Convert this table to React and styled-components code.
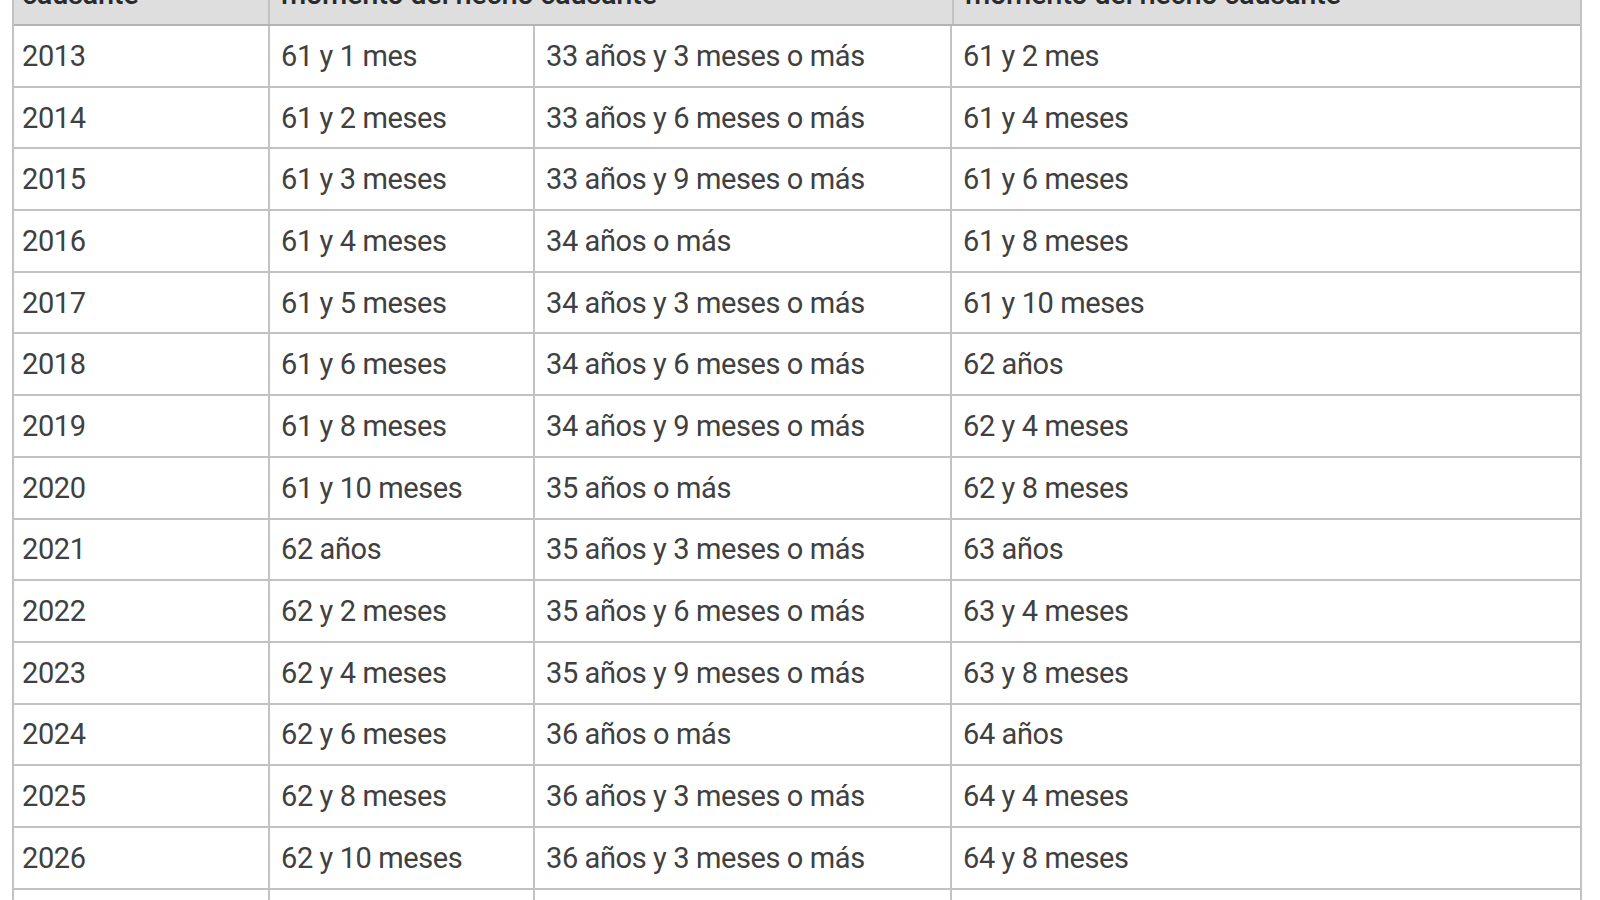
import React from 'react';
import styled, { createGlobalStyle } from 'styled-components';

const GlobalStyle = createGlobalStyle`
  html, body {
    margin: 0;
    padding: 0;
    background: #ffffff;
    overflow: hidden;
  }
  body {
    font-family: Roboto, "Liberation Sans", sans-serif;
    color: #404040;
  }
`;

const Page = styled.div`
  width: 1600px;
  height: 900px;
  overflow: hidden;
`;

const Table = styled.div`
  margin: -31px 0 0 12px;
  width: 1570px;
  border-left: 2px solid #c2c2c2;
  border-right: 2px solid #c2c2c2;
  box-sizing: border-box;
`;

const HeadRow = styled.div`
  display: grid;
  grid-template-columns: 254px 684px 1fr;
  background: #dedede;
  border-bottom: 2px solid #b4b4b4;
`;

const HeadCell = styled.div`
  padding: 8px 11px 13px ${p => (p.$first ? '8px' : '11px')};
  font-size: 29px;
  line-height: 34px;
  font-weight: 500;
  letter-spacing: -0.3px;
  color: #2a2a2a;
  white-space: nowrap;
  border-left: ${p => (p.$first ? 'none' : '2px solid #c2c2c2')};
`;

const Row = styled.div`
  display: grid;
  grid-template-columns: 254px 265px 417px 1fr;
  height: 61.7px;
  box-sizing: border-box;
  border-bottom: 2px solid #c2c2c2;
`;

const Cell = styled.div`
  display: flex;
  align-items: center;
  padding: 0 11px 0 ${p => (p.$first ? '8px' : '11px')};
  font-size: 29px;
  line-height: 34px;
  letter-spacing: -0.4px;
  color: #404040;
  white-space: nowrap;
  border-left: ${p => (p.$first ? 'none' : '2px solid #c2c2c2')};
`;

const rows = [
  ['2013', '61 y 1 mes', '33 años y 3 meses o más', '61 y 2 mes'],
  ['2014', '61 y 2 meses', '33 años y 6 meses o más', '61 y 4 meses'],
  ['2015', '61 y 3 meses', '33 años y 9 meses o más', '61 y 6 meses'],
  ['2016', '61 y 4 meses', '34 años o más', '61 y 8 meses'],
  ['2017', '61 y 5 meses', '34 años y 3 meses o más', '61 y 10 meses'],
  ['2018', '61 y 6 meses', '34 años y 6 meses o más', '62 años'],
  ['2019', '61 y 8 meses', '34 años y 9 meses o más', '62 y 4 meses'],
  ['2020', '61 y 10 meses', '35 años o más', '62 y 8 meses'],
  ['2021', '62 años', '35 años y 3 meses o más', '63 años'],
  ['2022', '62 y 2 meses', '35 años y 6 meses o más', '63 y 4 meses'],
  ['2023', '62 y 4 meses', '35 años y 9 meses o más', '63 y 8 meses'],
  ['2024', '62 y 6 meses', '36 años o más', '64 años'],
  ['2025', '62 y 8 meses', '36 años y 3 meses o más', '64 y 4 meses'],
  ['2026', '62 y 10 meses', '36 años y 3 meses o más', '64 y 8 meses'],
  ['', '', '', ''],
];

export default function App() {
  return (
    <Page>
      <GlobalStyle />
      <Table>
        <HeadRow>
          <HeadCell $first>causante</HeadCell>
          <HeadCell>momento del hecho causante</HeadCell>
          <HeadCell>momento del hecho causante</HeadCell>
        </HeadRow>
        {rows.map((r, i) => (
          <Row key={i}>
            {r.map((c, j) => (
              <Cell key={j} $first={j === 0}>{c}</Cell>
            ))}
          </Row>
        ))}
      </Table>
    </Page>
  );
}
